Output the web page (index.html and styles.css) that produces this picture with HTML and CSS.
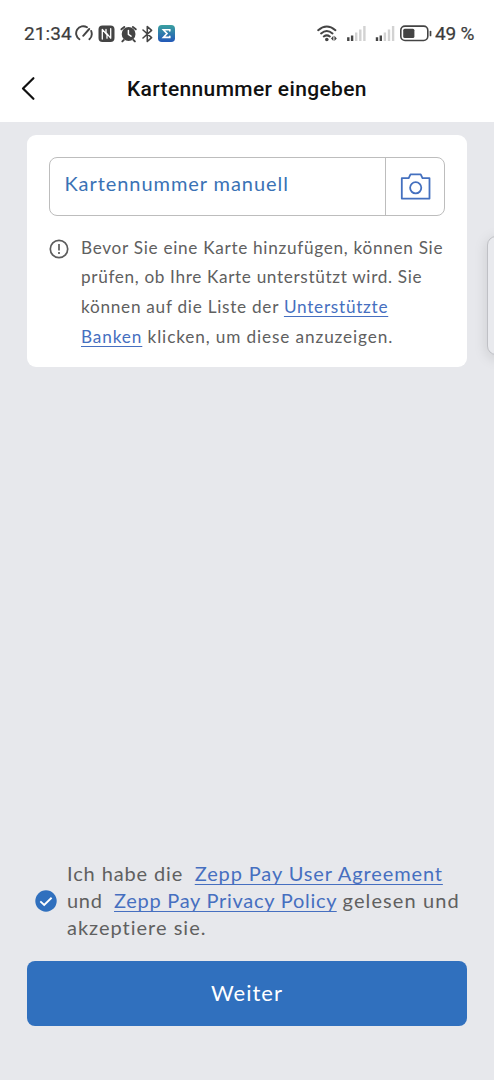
FILE: index.html
```html
<!DOCTYPE html>
<html lang="de">
<head>
<meta charset="utf-8">
<meta name="viewport" content="width=device-width, initial-scale=1">
<title>Kartennummer eingeben</title>
<link rel="stylesheet" href="styles.css">
</head>
<body>
<div class="screen">
  <div class="status">
    <span class="clock">21:34</span>
    <svg class="status-left" width="102" height="20" viewBox="0 0 102 20" fill="none" stroke="#444" stroke-width="1.9" stroke-linecap="round" stroke-linejoin="round">
      <path d="M4.4 15.2A7 7 0 0 1 12 3.3M16.2 7Q18 12.1 14.4 15.2M8.2 11.8L14.2 5"/>
      <rect x="23.5" y="1.6" width="16" height="16.4" rx="4" fill="#444" stroke="none"/>
      <path d="M27.3 15V5.4L32 10.8V14.2M31 5.4V8.6L35.7 14.2V4.6" stroke="#fff" stroke-width="1.3"/>
      <circle cx="53.6" cy="10" r="6.9" fill="#444" stroke="none"/>
      <path d="M46.4 5.3L49.3 2.9M60.8 5.3L57.9 2.9M48.8 16L47.3 17.4M58.4 16L59.9 17.4"/>
      <path d="M53.4 6.4V10.4L56 12.2" stroke="#fff" stroke-width="1.5"/>
      <path d="M68 6L76.6 13.7L72.3 17.5V2.5L76.6 6.3L68 14" stroke-width="1.6"/>
      <defs><linearGradient id="sigma" x1="0" y1="0" x2="0" y2="1"><stop offset="0" stop-color="#3aa0a0"/><stop offset="1" stop-color="#2258b8"/></linearGradient></defs>
      <rect x="83" y="1" width="17" height="17" rx="3.8" fill="url(#sigma)" stroke="none"/>
      <path d="M94.8 7V5.8H88.4L92 9.6L88.4 13.4H94.8V12.2" stroke="#fff" stroke-width="1.6" stroke-linejoin="miter"/>
    </svg>
    <svg class="status-right" width="118" height="20" viewBox="0 0 118 20" fill="none" stroke="#444" stroke-width="2" stroke-linecap="round">
      <path d="M1.2 6.2Q9.8-1.1 18.4 6.2M4.1 9.4Q9.8 4.6 15.5 9.4M6.8 12.5Q9.8 10.2 12.8 12.5"/>
      <circle cx="9.8" cy="15.5" r="1.8" fill="#444" stroke="none"/>
      <path d="M16.4 11.7L14 14.4L16.4 17.1ZM17.4 11.7L19.8 14.4L17.4 17.1Z" fill="#444" stroke="none"/>
      <g stroke-linecap="butt" stroke-width="2.4">
        <path d="M31.3 17V13.3M35.1 17V11.4"/><path d="M39.2 17V8.5M43.3 17V5.5M47.4 17V2" stroke="#d2d2d2"/>
        <path d="M60 17V13.3M63.8 17V11.4"/><path d="M67.9 17V8.5M72 17V5.5M76.1 17V2" stroke="#d2d2d2"/>
      </g>
      <rect x="83.8" y="2.1" width="27" height="14.4" rx="4.2" stroke-width="1.6"/>
      <rect x="86.2" y="4.7" width="11.2" height="9.4" rx="1.5" fill="#444" stroke="none"/>
      <path d="M113.5 7.6V11.4" stroke-width="1.7"/>
    </svg>
    <span class="percent">49 %</span>
  </div>
  <header class="bar">
    <svg class="back" width="18" height="28" viewBox="0 0 18 28" fill="none" stroke="#111" stroke-width="2.2" stroke-linecap="round" stroke-linejoin="round"><path d="M13.4 3.2L3 13.5L13.4 23.8"/></svg>
    <h1 class="title">Kartennummer eingeben</h1>
  </header>
  <main class="content">
    <section class="card">
      <div class="field">
        <div class="field-text">Kartennummer manuell</div>
        <div class="scan">
          <svg width="32" height="30" viewBox="0 0 32 30" fill="none" stroke="#4470bf" stroke-width="1.8" stroke-linejoin="round"><path d="M2.8 6.2H9.7L11.5 2.3H21.7L23.5 6.2H30.5V26.6H2.8Z"/><circle cx="16.7" cy="15.8" r="5.6"/></svg>
        </div>
      </div>
      <div class="note">
        <svg class="info" width="20" height="20" viewBox="0 0 20 20" fill="none" stroke="#5c5c5c" stroke-width="1.7"><circle cx="10" cy="10" r="8.7"/><path d="M10 5.1V11.4M10 13V14.9"/></svg>
        <p class="note-text">
          <span class="line n1">Bevor Sie eine Karte hinzufügen, können Sie</span>
          <span class="line n2">prüfen, ob Ihre Karte unterstützt wird. Sie</span>
          <span class="line n3">können auf die Liste der <a class="link">Unterstützte</a></span>
          <span class="line n4"><a class="link">Banken</a> klicken, um diese anzuzeigen.</span>
        </p>
      </div>
    </section>
    <div class="agree">
      <svg class="check" width="22" height="22" viewBox="0 0 22 22" fill="none"><circle cx="11" cy="11" r="10.7" fill="#3070be"/><path d="M5.3 11.4L9.2 14.9L16.6 7.8" stroke="#fff" stroke-width="1.9"/></svg>
      <p class="agree-text">
        <span class="line a1">Ich habe die <a class="link gap">Zepp Pay User Agreement</a></span>
        <span class="line a2">und <a class="link gap">Zepp Pay Privacy Policy</a> <span class="tail">gelesen und</span></span>
        <span class="line a3">akzeptiere sie.</span>
      </p>
    </div>
    <button class="next">Weiter</button>
  </main>
  <div class="edge-panel"></div>
</div>
</body>
</html>
```
FILE: styles.css
```css
* { box-sizing: border-box; }
body { margin: 0; }
.screen { position: relative; width: 494px; height: 1080px; overflow: hidden; display: flex; flex-direction: column; background: #e7e8ec; font-family: Lato, "Noto Sans", sans-serif; color: #606060; }
.status { height: 56px; padding: 11px 0 0 24px; display: flex; align-items: center; background: #fff; font-family: Roboto, sans-serif; font-weight: 400; font-size: 19px; color: #3c3c3c; -webkit-text-stroke: .2px #3c3c3c; white-space: nowrap; }
.clock { width: 51px; letter-spacing: .1px; }
.status-left { flex: none; }
.status-right { flex: none; margin-left: 140px; }
.percent { letter-spacing: -.2px; }
.percent, .clock { margin-top: -1px; }
.bar { height: 66px; padding: 0 0 0 20px; display: flex; align-items: center; background: #fff; }
.back { flex: none; }
.title { margin: 0 0 0 89px; font: 500 21px/28px Roboto, sans-serif; letter-spacing: .35px; color: #111; white-space: nowrap; }
.content { flex: 1; display: flex; flex-direction: column; padding: 13px 27px 54px; }
.card { height: 232px; padding: 22px 22px 0; border-radius: 9px; background: #fff; }
.field { height: 59px; display: flex; border: 1px solid #bdbdbd; border-radius: 8px; }
.field-text { flex: 1; padding: 11px 0 0 14.5px; font-size: 20px; line-height: 29px; letter-spacing: .93px; color: #3a72b5; white-space: nowrap; }
.scan { width: 59px; display: flex; align-items: center; justify-content: center; border-left: 1px solid #bdbdbd; }
.note { display: flex; margin-top: 16.5px; }
.info { flex: none; margin: 6.5px 12px 0 0; }
.note-text, .agree-text { margin: 0; }
.line { display: block; white-space: nowrap; }
.note-text { font-size: 17.2px; line-height: 29.7px; letter-spacing: .7px; }
.n2 { letter-spacing: .65px; }
.n3 { letter-spacing: .73px; }
.n4 { letter-spacing: .88px; }
.link { color: #466fc0; text-decoration: underline; text-decoration-thickness: 1px; text-underline-offset: 3px; text-decoration-skip-ink: none; }
.agree { display: flex; align-items: center; margin-top: auto; padding-left: 8px; }
.check { flex: none; margin-right: 10px; }
.agree-text { font-size: 20px; line-height: 27px; letter-spacing: .88px; }
.a2 { letter-spacing: .72px; }
.a3 { letter-spacing: 1px; }
.tail { letter-spacing: 1.1px; }
.gap { margin-left: 5.5px; }
.next { height: 65px; margin-top: 20px; padding: 0 0 2px; border: 0; border-radius: 8px; background: #3070be; color: #fff; font: 22px/28px Lato, sans-serif; letter-spacing: 1px; }
.edge-panel { position: absolute; left: 487px; top: 236px; width: 30px; height: 119px; border: 1.5px solid #bfc0c5; border-radius: 9px; background: #e9eaee; box-shadow: 0 3px 14px rgba(0, 0, 0, .13); }
```
